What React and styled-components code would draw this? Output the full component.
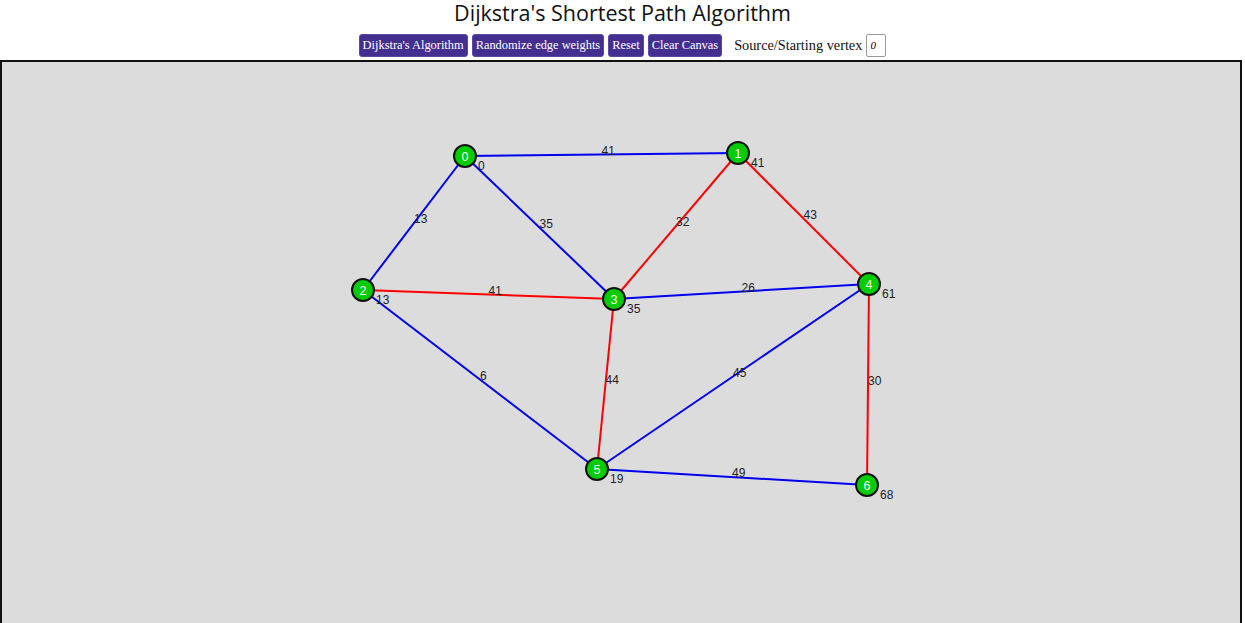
import React from "react";
import styled, { createGlobalStyle } from "styled-components";

const Global = createGlobalStyle`
  html, body { margin: 0; padding: 0; background: #fff; overflow: hidden; }
  body { font-family: "Liberation Serif", serif; }
`;

const Page = styled.div`
  display: flex;
  flex-direction: column;
  align-items: center;
  width: 1245px;
  height: 623px;
`;

const Title = styled.h1`
  margin: 0 0 4px;
  line-height: 26px;
  font-family: "Open Sans", "Noto Sans", sans-serif;
  font-weight: 400;
  font-size: 21.5px;
  color: #111;
`;

const Controls = styled.div`
  display: flex;
  align-items: center;
  gap: 4px;
  height: 24px;
  margin-top: 3px;
  margin-bottom: 3px;
`;

const Button = styled.button`
  height: 23px;
  padding: 0 3px;
  border: 1px solid #5a4aa3;
  border-radius: 3px;
  background: #432f90;
  color: #fff;
  font-family: "Liberation Serif", serif;
  font-size: 12.4px;
  cursor: pointer;
`;

const Label = styled.label`
  margin-left: 8px;
  display: flex;
  align-items: center;
  gap: 4px;
  font-family: "Liberation Serif", serif;
  font-size: 14.3px;
  color: #111;
`;

const Input = styled.input`
  width: 20px;
  height: 23px;
  box-sizing: border-box;
  border: 1px solid #999;
  border-radius: 2px;
  padding: 0 3px;
  font-family: "Liberation Serif", serif;
  font-style: italic;
  font-size: 11px;
`;

const Canvas = styled.div`
  align-self: flex-start;
  width: 1242px;
  height: 563px;
  box-sizing: border-box;
  border: 2px solid #111;
  border-bottom: 0;
  background: #dcdcdc;
  overflow: hidden;
`;

const nodes = [
  { id: 0, x: 465, y: 156, d: 0 },
  { id: 1, x: 738, y: 153, d: 41 },
  { id: 2, x: 363, y: 290, d: 13 },
  { id: 3, x: 614, y: 299, d: 35 },
  { id: 4, x: 869, y: 284, d: 61 },
  { id: 5, x: 597, y: 469, d: 19 },
  { id: 6, x: 867, y: 485, d: 68 },
];

const edges = [
  [0, 1, 41, "blue"],
  [0, 2, 13, "blue"],
  [0, 3, 35, "blue"],
  [1, 3, 32, "red"],
  [1, 4, 43, "red"],
  [2, 3, 41, "red"],
  [3, 4, 26, "blue"],
  [2, 5, 6, "blue"],
  [3, 5, 44, "red"],
  [4, 5, 45, "blue"],
  [4, 6, 30, "red"],
  [5, 6, 49, "blue"],
];

const colorMap = { blue: "#0000ee", red: "#ff0000" };

function Graph() {
  return (
    <svg width="1238" height="561" viewBox="2 62 1238 561" style={{ display: "block" }}>
      {edges.map(([a, b, w, c], i) => {
        const A = nodes[a];
        const B = nodes[b];
        return (
          <line key={"l" + i} x1={A.x} y1={A.y} x2={B.x} y2={B.y} stroke={colorMap[c]} strokeWidth="2" />
        );
      })}
      {edges.map(([a, b, w], i) => {
        const A = nodes[a];
        const B = nodes[b];
        const mx = (A.x + B.x) / 2;
        const my = (A.y + B.y) / 2;
        return (
          <text key={"w" + i} x={mx} y={my} fontFamily="Liberation Sans, Arial, sans-serif" fontSize="12" fill="#222">
            {w}
          </text>
        );
      })}
      {nodes.map((n) => (
        <g key={"n" + n.id}>
          <circle cx={n.x} cy={n.y} r="11" fill="#00cc00" stroke="#111" strokeWidth="2" />
          <text x={n.x} y={n.y + 4.5} textAnchor="middle" fontFamily="Liberation Sans, Arial, sans-serif" fontSize="12.5" fill="#fff">
            {n.id}
          </text>
          <text x={n.x + 13} y={n.y + 13.5} fontFamily="Liberation Sans, Arial, sans-serif" fontSize="12" fill="#222">
            {n.d}
          </text>
        </g>
      ))}
    </svg>
  );
}

export default function App() {
  return (
    <>
      <Global />
      <Page>
        <Title>Dijkstra's Shortest Path Algorithm</Title>
        <Controls>
          <Button>Dijkstra's Algorithm</Button>
          <Button>Randomize edge weights</Button>
          <Button>Reset</Button>
          <Button>Clear Canvas</Button>
          <Label>
            Source/Starting vertex
            <Input defaultValue="0" />
          </Label>
        </Controls>
        <Canvas>
          <Graph />
        </Canvas>
      </Page>
    </>
  );
}
